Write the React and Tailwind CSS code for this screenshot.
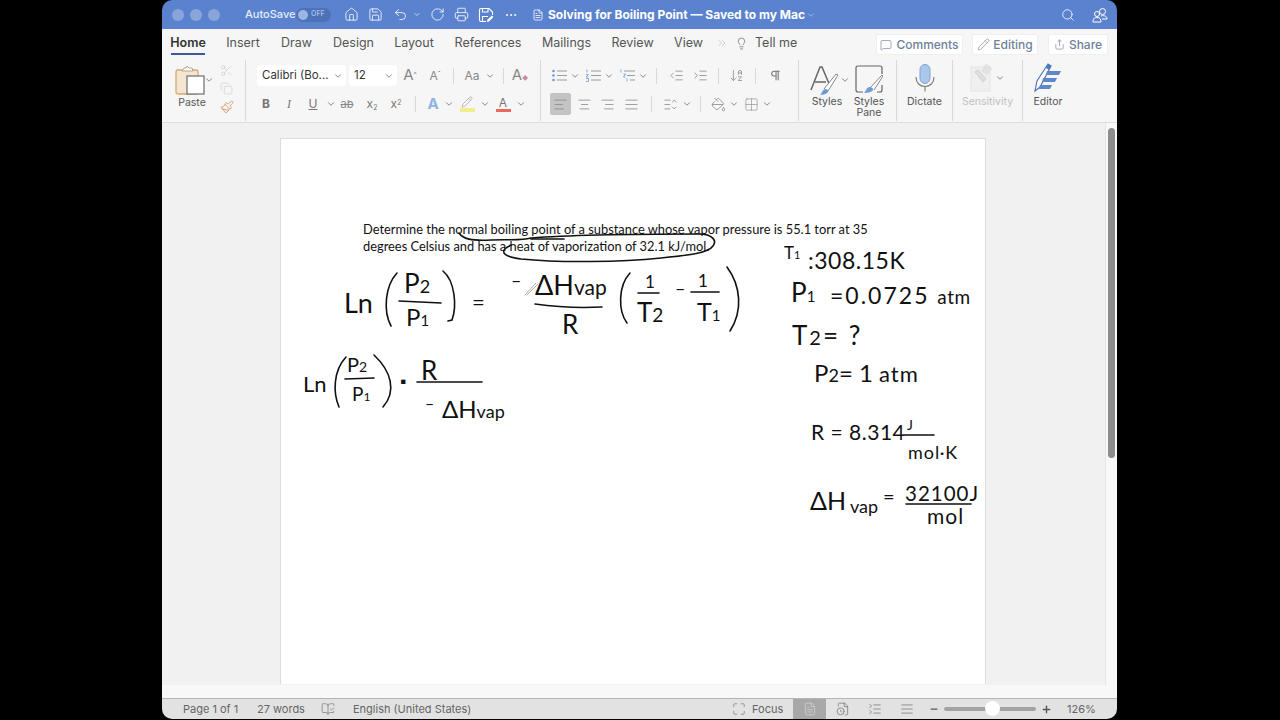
import React from "react";
import {
  House, Save, Undo2, RotateCw, Printer, Ellipsis, Search, Lightbulb, MessageSquare, Pencil, Share,
  ChevronDown, ChevronsRight, Scissors, Copy, Paintbrush, IndentDecrease,
  IndentIncrease, ArrowDownAZ, Pilcrow, AlignLeft, AlignCenter, AlignRight, AlignJustify, ListChevronsUpDown,
  PaintBucket, Grid2x2, BookOpenCheck, Maximize, FileText, Minus, Plus, AlignJustify as Lines, FileClock, ListCollapse,
} from "lucide-react";

const Chev = ({ className = "" }) => <ChevronDown className={`w-[10px] h-[10px] text-gray-500 shrink-0 ${className}`} strokeWidth={2} />;
const Div = ({ className = "" }) => <div className={`w-px bg-[#d9d9d9] shrink-0 ${className}`} />;

function Tab({ children, active, className }) {
  return (
    <div className={`flex flex-col items-center shrink-0 ${className}`}>
      <span className={`text-[12.5px] leading-[16px] ${active ? "font-semibold text-[#333]" : "text-[#555]"}`}>{children}</span>
      {active && <div className="w-[34px] h-[2px] bg-[#3c5a9a] mt-[2px] -mb-[4px]" />}
    </div>
  );
}

function PasteIcon() {
  return (
    <svg width="30" height="30" viewBox="0 0 30 30" fill="none">
      <rect x="1" y="5" width="22" height="24" rx="2" fill="#f4e6d2" stroke="#d9a86c" strokeWidth="1.3" />
      <path d="M7 6 L9 3 H11 L12 1 L14 3 H17 L18 6 Z" fill="#fff" stroke="#b9a58c" />
      <rect x="12" y="11" width="17" height="18" fill="#fff" stroke="#777" strokeWidth="1.3" />
    </svg>
  );
}

function StylesIcon() {
  return (
    <svg width="30" height="30" viewBox="0 0 30 30" fill="none">
      <path d="M2 25 L11 2 H13 L21 21 M6 17 H17" stroke="#666" strokeWidth="1.5" />
      <path d="M15 24 L27 9 L29 10 L19 26" stroke="#888" fill="#fff" />
      <path d="M11 30 C13 29 13 25 16 24 C18 24 20 25 19 27 C18 29 14 30 11 30 Z" fill="#6d9bd8" />
    </svg>
  );
}

function PaneIcon() {
  return (
    <svg width="28" height="28" viewBox="0 0 28 28" fill="none">
      <path d="M8 27 H3 Q1 27 1 25 V3 Q1 1 3 1 H25 Q27 1 27 3 V9 M27 20 V25 Q27 27 25 27 H22" stroke="#666" strokeWidth="1.2" />
      <path d="M15 23 L27 10 L28 11 L19 25" stroke="#888" fill="#fff" />
      <path d="M9 28 C11 27 11 23 14 22 C17 22 19 24 18 25 C17 27 13 28 9 28 Z" fill="#6d9bd8" />
    </svg>
  );
}

function MicIcon() {
  return (
    <svg width="20" height="28" viewBox="0 0 20 28" fill="none">
      <rect x="5" y="0.5" width="10" height="19" rx="5" fill="#a9c8ec" stroke="#7ea4d6" />
      <path d="M1 13 C1 19 5 22.5 10 22.5 C15 22.5 19 19 19 13 M10 22.5 V27.5" stroke="#777" strokeWidth="1.1" />
    </svg>
  );
}

function SensitivityIcon() {
  return (
    <svg width="24" height="28" viewBox="0 0 24 28" fill="none">
      <rect x="1" y="3" width="19" height="24" fill="#efefef" stroke="#e4e4e4" />
      <path d="M5 8 L13 18 L16 15 L8 6 Z" fill="#dedede" stroke="#d2d2d2" />
      <rect x="13" y="1" width="8" height="9" rx="2" fill="#e2e2e2" transform="rotate(35 17 5)" />
    </svg>
  );
}

function EditorIcon() {
  return (
    <svg width="30" height="30" viewBox="0 0 30 30" fill="none">
      <path d="M2 28 L4 18 L15 1 L18 3 L7 24 Z" stroke="#4f77bd" strokeWidth="1.2" fill="#fff" />
      <path d="M15 1 L18 3 L16 7 L13 5 Z" fill="#4f77bd" />
      <path d="M14 8 H28 L26 12 H13 Z M10 15 H24 L22 19 H9 Z M7 22 H19 L17 26 H6 Z" fill="#5f86c9" />
    </svg>
  );
}

function SaveEditIcon() {
  return (
    <svg width="16" height="16" viewBox="0 0 16 16" fill="none" stroke="white" strokeWidth="1.1">
      <path d="M8 14.5 H3 Q1.5 14.5 1.5 13 V3 Q1.5 1.5 3 1.5 H11 L14.5 5 V8" />
      <path d="M4.5 1.5 V5 H10 V1.5 M4.5 14 V9.5 H10" />
      <path d="M9 15 L9.5 12.5 L14 8.5 L15.5 10 L11 14.5 Z" fill="white" stroke="none" />
    </svg>
  );
}

function BulletIcon() {
  return (
    <svg width="15" height="13" viewBox="0 0 15 13" className="shrink-0" stroke="#9a9a9a" strokeWidth="1">
      <path d="M5 2 H15 M5 6.5 H15 M5 11 H15" />
      <circle cx="1.5" cy="2" r="1.3" fill="#6f9bd4" stroke="none" />
      <circle cx="1.5" cy="6.5" r="1.3" fill="#6f9bd4" stroke="none" />
      <circle cx="1.5" cy="11" r="1.3" fill="#6f9bd4" stroke="none" />
    </svg>
  );
}

function NumberIcon() {
  return (
    <svg width="15" height="13" viewBox="0 0 15 13" className="shrink-0" stroke="#9a9a9a" strokeWidth="1">
      <path d="M5 2 H15 M5 6.5 H15 M5 11 H15" />
      <path d="M1 0.5 V3.5 M0 5.5 H2.5 L0 8 H2.5 M0 9.5 H2.5 V12.5 H0" stroke="#6f9bd4" strokeWidth="0.8" fill="none" />
    </svg>
  );
}

function MultiIcon() {
  return (
    <svg width="15" height="13" viewBox="0 0 15 13" className="shrink-0" stroke="#9a9a9a" strokeWidth="1">
      <path d="M4 2 H15 M7 6.5 H15 M10 11 H15" />
      <path d="M1 0.5 V3.5 M3.5 5 H5.5 L3.5 8 H5.5 M7 9.5 V12.5" stroke="#6f9bd4" strokeWidth="0.8" fill="none" />
    </svg>
  );
}

function TitleBar() {
  return (
    <div className="h-[29px] shrink-0 bg-[#5a82ce] rounded-t-[10px] flex items-center text-white">
      <div className="w-[10px] shrink-0" />
      <div className="flex gap-[6px] w-[73px] shrink-0">
        <span className="w-[12px] h-[12px] rounded-full bg-[#8aa5da]" />
        <span className="w-[12px] h-[12px] rounded-full bg-[#8aa5da]" />
        <span className="w-[12px] h-[12px] rounded-full bg-[#8aa5da]" />
      </div>
      <span className="text-[11px] font-medium w-[51px] shrink-0 text-[#e6edf9]">AutoSave</span>
      <div className="w-[35px] h-[14px] rounded-full bg-[#4d72b8] flex items-center shrink-0 pl-[2px] gap-[3px]">
        <span className="w-[10px] h-[10px] rounded-full bg-[#9db5e3]" />
        <span className="text-[7px] font-semibold text-[#a7bde6]">OFF</span>
      </div>
      <div className="w-[8px] shrink-0" />
      <div className="w-[24px] flex justify-center shrink-0"><House className="w-[15px] h-[15px]" strokeWidth={1.3} /></div>
      <div className="w-[24px] flex justify-center shrink-0"><Save className="w-[15px] h-[15px]" strokeWidth={1.3} /></div>
      <div className="w-[26px] flex justify-center shrink-0"><Undo2 className="w-[15px] h-[15px]" strokeWidth={1.3} /></div>
      <div className="w-[8px] flex justify-center shrink-0"><ChevronDown className="w-[9px] h-[9px]" /></div>
      <div className="w-[32px] flex justify-center shrink-0"><RotateCw className="w-[15px] h-[15px]" strokeWidth={1.3} /></div>
      <div className="w-[16px] flex justify-center shrink-0"><Printer className="w-[15px] h-[15px]" strokeWidth={1.3} /></div>
      <div className="w-[34px] flex justify-center shrink-0"><SaveEditIcon /></div>
      <div className="w-[16px] flex justify-center shrink-0"><Ellipsis className="w-[14px] h-[14px]" strokeWidth={1.6} /></div>
      <div className="w-[26px] flex justify-end shrink-0 pr-[1px]"><FileText className="w-[12px] h-[12px]" strokeWidth={1.6} /></div>
      <span className="ml-[3px] text-[12px] font-bold whitespace-nowrap w-[258px] shrink-0">Solving for Boiling Point — Saved to my Mac</span>
      <ChevronDown className="w-[10px] h-[10px] text-[#a9c0ea] shrink-0" />
      <div className="flex-1" />
      <Search className="w-[14px] h-[14px] shrink-0 mr-[17px]" strokeWidth={1.4} />
      <svg width="16" height="16" viewBox="0 0 16 16" fill="none" stroke="white" strokeWidth="1" className="shrink-0 mr-[9px]">
        <circle cx="10.5" cy="4.5" r="3" />
        <circle cx="5" cy="7" r="2.5" />
        <path d="M1 15 C1 11 3 10.5 5 10.5 C8 10.5 9 12 9 15 Z M9 9 C12 8 15 9 15 12 H10" />
      </svg>
    </div>
  );
}

function TabRow() {
  return (
    <div className="h-[30px] shrink-0 bg-[#f6f6f6] flex items-center pl-[9px] pb-[2px]">
      <Tab active className="w-[34px]">Home</Tab>
      <Tab className="w-[32px] ml-[22px]">Insert</Tab>
      <Tab className="w-[29px] ml-[23px]">Draw</Tab>
      <Tab className="w-[39px] ml-[23px]">Design</Tab>
      <Tab className="w-[38px] ml-[22px]">Layout</Tab>
      <Tab className="w-[64px] ml-[23px]">References</Tab>
      <Tab className="w-[47px] ml-[23px]">Mailings</Tab>
      <Tab className="w-[39px] ml-[23px]">Review</Tab>
      <Tab className="w-[27px] ml-[23px]">View</Tab>
      <ChevronsRight className="w-[12px] h-[12px] text-[#cfcfcf] ml-[14px] shrink-0" />
      <Lightbulb className="w-[13px] h-[13px] text-[#666] ml-[7px] shrink-0" strokeWidth={1.3} />
      <span className="text-[12.5px] text-[#555] ml-[7px] w-[40px] whitespace-nowrap shrink-0">Tell me</span>
      <div className="w-[81px] shrink-0" />
      <div className="w-[87px] h-[21px] bg-white border border-[#efefef] rounded-[2px] flex items-center justify-center gap-[4px] text-[12px] font-medium text-[#6f7f9c] shrink-0 mt-[3px]">
        <MessageSquare className="w-[12px] h-[12px]" strokeWidth={1.3} />Comments
      </div>
      <div className="w-[66px] h-[21px] ml-[9px] bg-white border border-[#efefef] rounded-[2px] flex items-center justify-center gap-[3px] text-[12px] font-medium text-[#6f7f9c] shrink-0 mt-[3px]">
        <Pencil className="w-[13px] h-[13px]" strokeWidth={1.1} />Editing
      </div>
      <div className="w-[60px] h-[21px] ml-[10px] bg-white border border-[#efefef] rounded-[2px] flex items-center justify-center gap-[4px] text-[12px] font-medium text-[#6f7f9c] shrink-0 mt-[3px]">
        <Share className="w-[11px] h-[11px]" strokeWidth={1.4} />Share
      </div>
    </div>
  );
}

function FontRows() {
  return (
    <div className="w-[294px] shrink-0 flex flex-col">
      <div className="h-[21px] flex items-center mt-[6px] pl-[11px]">
        <div className="w-[89px] h-[21px] bg-white rounded-[3px] flex items-center pl-[5px] pr-[3px] justify-between shrink-0">
          <span className="text-[11.5px] text-[#333] whitespace-nowrap">Calibri (Bo...</span><Chev />
        </div>
        <div className="w-[48px] h-[21px] ml-[3px] bg-white rounded-[3px] flex items-center pl-[5px] pr-[3px] justify-between shrink-0">
          <span className="text-[11.5px] text-[#333]">12</span><Chev />
        </div>
        <div className="w-[26px] text-center text-[15px] text-[#888] shrink-0">A<sup className="text-[7px]">^</sup></div>
        <div className="w-[24px] text-center text-[12px] text-[#888] shrink-0">A<sup className="text-[7px]">ˇ</sup></div>
        <div className="w-[12px] flex justify-center shrink-0"><Div className="h-[16px]" /></div>
        <div className="w-[26px] text-center text-[12px] text-[#888] shrink-0">Aa</div>
        <Chev />
        <div className="w-[16px] flex justify-center shrink-0"><Div className="h-[16px]" /></div>
        <div className="w-[18px] text-center text-[15px] text-[#888] shrink-0 whitespace-nowrap">A<span className="text-[6px] text-[#c98aa0]">◆</span></div>
      </div>
      <div className="h-[22px] flex items-center mt-[7px] pl-[8px]">
        <div className="w-[24px] text-center text-[12px] font-bold text-[#777] shrink-0">B</div>
        <div className="w-[22px] text-center text-[12px] italic text-[#777] font-['Liberation_Serif',serif] shrink-0">I</div>
        <div className="w-[26px] text-center text-[12px] underline text-[#777] shrink-0">U</div>
        <Chev />
        <div className="w-[26px] text-center text-[11px] line-through text-[#888] shrink-0 ml-[-2px]">ab</div>
        <div className="w-[24px] text-center text-[12px] text-[#777] shrink-0">x<sub className="text-[7px]">2</sub></div>
        <div className="w-[24px] text-center text-[12px] text-[#777] shrink-0">x<sup className="text-[7px]">2</sup></div>
        <div className="w-[14px] flex justify-center shrink-0"><Div className="h-[16px]" /></div>
        <div className="w-[22px] text-center text-[15px] font-bold text-[#8fb4e4] shrink-0">A</div>
        <Chev />
        <div className="w-[26px] flex flex-col items-center shrink-0">
          <Pencil className="w-[12px] h-[12px] text-[#999]" strokeWidth={1.3} />
          <div className="w-[15px] h-[4px] bg-[#f3ee8d]" />
        </div>
        <Chev />
        <div className="w-[26px] flex flex-col items-center shrink-0">
          <span className="text-[12px] leading-[12px] text-[#777]">A</span>
          <div className="w-[15px] h-[3px] bg-[#e8685e]" />
        </div>
        <Chev />
      </div>
    </div>
  );
}

function ParaRows() {
  const ic = "w-[15px] h-[15px] text-[#8a8a8a] shrink-0";
  return (
    <div className="w-[257px] shrink-0 flex flex-col">
      <div className="h-[21px] flex items-center mt-[6px] pl-[11px]">
        <BulletIcon />
        <div className="w-[15px] flex justify-center shrink-0"><Chev /></div>
        <div className="w-[4px] shrink-0" />
        <NumberIcon />
        <div className="w-[15px] flex justify-center shrink-0"><Chev /></div>
        <div className="w-[4px] shrink-0" />
        <MultiIcon />
        <div className="w-[15px] flex justify-center shrink-0"><Chev /></div>
        <div className="w-[6px] shrink-0" />
        <Div className="h-[16px]" />
        <div className="w-[12px] shrink-0" />
        <IndentDecrease className={ic} strokeWidth={1.3} />
        <div className="w-[9px] shrink-0" />
        <IndentIncrease className={ic} strokeWidth={1.3} />
        <div className="w-[10px] shrink-0" />
        <Div className="h-[16px]" />
        <div className="w-[10px] shrink-0" />
        <ArrowDownAZ className={ic} strokeWidth={1.3} />
        <div className="w-[11px] shrink-0" />
        <Div className="h-[16px]" />
        <div className="w-[13px] shrink-0" />
        <Pilcrow className="w-[13px] h-[13px] text-[#777] shrink-0" strokeWidth={2} />
      </div>
      <div className="h-[22px] flex items-center mt-[7px] pl-[9px]">
        <div className="w-[21px] h-[22px] bg-[#c4c4c4] rounded-[2px] flex items-center justify-center shrink-0">
          <AlignLeft className={ic} strokeWidth={1.3} />
        </div>
        <div className="w-[24px] flex justify-center pl-[3px] shrink-0"><AlignCenter className={ic} strokeWidth={1.3} /></div>
        <div className="w-[24px] flex justify-center shrink-0"><AlignRight className={ic} strokeWidth={1.3} /></div>
        <div className="w-[24px] flex justify-center shrink-0"><AlignJustify className={ic} strokeWidth={1.3} /></div>
        <div className="w-[17px] flex justify-center shrink-0"><Div className="h-[16px]" /></div>
        <ListChevronsUpDown className={`${ic} ml-[3px]`} strokeWidth={1.3} />
        <div className="w-[17px] flex justify-center shrink-0"><Chev /></div>
        <div className="w-[5px] shrink-0" />
        <Div className="h-[16px]" />
        <div className="w-[10px] shrink-0" />
        <PaintBucket className={ic} strokeWidth={1.3} />
        <div className="w-[16px] flex justify-center shrink-0"><Chev /></div>
        <div className="w-[2px] shrink-0" />
        <Grid2x2 className={ic} strokeWidth={1} />
        <div className="w-[16px] flex justify-center shrink-0"><Chev /></div>
      </div>
    </div>
  );
}

function Label({ children, className = "" }) {
  return <span className={`text-[10.5px] leading-[11px] text-center ${className}`}>{children}</span>;
}

function Ribbon() {
  return (
    <div className="h-[64px] shrink-0 bg-[#f6f6f6] border-b border-[#dedede] flex items-stretch text-[#555]">
      <div className="w-[60px] shrink-0 flex flex-col items-center pt-[6px]">
        <div className="flex items-center pl-[5px]"><PasteIcon /><Chev className="-ml-[1px]" /></div>
        <Label className="mt-[2px]">Paste</Label>
      </div>
      <div className="w-[23px] shrink-0 flex flex-col items-center gap-[5px] pt-[5px] -ml-[6px] mr-[6px] pr-[2px]">
        <Scissors className="w-[13px] h-[13px] text-[#ccc]" strokeWidth={1.2} />
        <Copy className="w-[13px] h-[13px] text-[#ccc]" strokeWidth={1.2} />
        <Paintbrush className="w-[14px] h-[14px] text-[#c98f5d]" strokeWidth={1.4} />
      </div>
      <Div className="my-[1px]" />
      <FontRows />
      <Div className="my-[1px]" />
      <ParaRows />
      <Div className="my-[1px]" />
      <div className="w-[97px] shrink-0 flex">
        <div className="w-[51px] shrink-0 flex flex-col items-center pt-[6px] pl-[9px]">
          <div className="flex items-center"><StylesIcon /><Chev className="ml-[1px]" /></div>
          <Label className="mt-[1px] -ml-[4px]">Styles</Label>
        </div>
        <div className="w-[38px] shrink-0 flex flex-col items-center pt-[6px]">
          <PaneIcon />
          <Label className="mt-[3px]">Styles<br />Pane</Label>
        </div>
      </div>
      <Div className="my-[1px]" />
      <div className="w-[55px] shrink-0 flex flex-col items-center pt-[5px]">
        <MicIcon />
        <Label className="mt-[4px]">Dictate</Label>
      </div>
      <Div className="my-[1px]" />
      <div className="w-[69px] shrink-0 flex flex-col items-center pt-[5px] text-[#c0c0c0]">
        <div className="flex items-center"><SensitivityIcon /><Chev className="ml-[1px]" /></div>
        <Label className="mt-[4px]">Sensitivity</Label>
      </div>
      <Div className="my-[1px]" />
      <div className="w-[50px] shrink-0 flex flex-col items-center pt-[4px]">
        <EditorIcon />
        <Label className="mt-[3px]">Editor</Label>
      </div>
    </div>
  );
}

// ink text sits on the page like pen marks, so it is placed by coordinate
function Ink({ className, children }) {
  return <span className={`absolute whitespace-nowrap font-['Lato',sans-serif] font-normal leading-none text-[#111] ${className}`}>{children}</span>;
}

function InkStrokes() {
  return (
    <svg className="absolute left-0 top-0" width="705" height="546" viewBox="280 138 705 546" fill="none" stroke="#111" strokeWidth="1.6" strokeLinecap="round">
      {/* circled heat of vaporization */}
      <path d="M458 232 C462 238 470 240 490 239 C505 238 520 240 530 237 C580 233 650 233 698 233 C712 233 716 240 712 245 C707 252 690 254 660 257 C620 261 560 262 520 258 C505 256 499 252 505 247 L510 244" />
      <path d="M530 238 L563 238" />
      {/* parens */}
      <path d="M396 272 C384 285 382 310 390 325" />
      <path d="M442 270 C454 280 456 305 451 319 L447 320" />
      <path d="M629 272 C617 285 617 310 626 322" />
      <path d="M726 266 C740 285 742 310 729 330" />
      <path d="M345 356 C332 370 332 392 338 406" />
      <path d="M373 354 C390 370 396 390 382 406" />
      {/* fraction bars */}
      <path d="M398 300 L440 302" />
      <path d="M534 303 C555 306 580 307 601 306" />
      <path d="M637 292 L658 292" />
      <path d="M690 291 L718 291" />
      <path d="M344 378 L373 377" />
      <path d="M416 381 L481 381" />
      <path d="M903 434 L933 434" />
      <path d="M905 503 L970 503" />
      {/* pen cursor */}
      <path d="M524 294 L535 282 M526 294 L537 283" stroke="#999" strokeWidth="0.8" />
    </svg>
  );
}

function Page() {
  return (
    <div className="relative w-[706px] h-[546px] ml-[118px] mt-[15px] bg-white border border-[#dcdcdc] border-b-0 shrink-0">
      <div className="pt-[82px] pl-[82px] font-['Lato',sans-serif] text-[12.85px] leading-[16.5px] text-[#111] whitespace-nowrap">
        <p>Determine the normal boiling point of a substance whose vapor pressure is 55.1 torr at 35</p>
        <p>degrees Celsius and has a heat of vaporization of 32.1 kJ/mol.</p>
      </div>
      <InkStrokes />
      <Ink className="left-[63px] top-[150px] text-[27px]">Ln</Ink>
      <Ink className="left-[123px] top-[131px] text-[26px]">P<span className="text-[18px]">2</span></Ink>
      <Ink className="left-[125px] top-[166px] text-[24px]">P<span className="text-[15px]">1</span></Ink>
      <Ink className="left-[191px] top-[152px] text-[22px]">=</Ink>
      <Ink className="left-[230px] top-[132px] text-[18px]">–</Ink>
      <Ink className="left-[254px] top-[132px] text-[27px]">ΔH<span className="text-[21px]">vap</span></Ink>
      <Ink className="left-[281px] top-[172px] text-[26px]">R</Ink>
      <Ink className="left-[364px] top-[134px] text-[17px]">1</Ink>
      <Ink className="left-[356px] top-[160px] text-[26px]">T<span className="text-[19px]">2</span></Ink>
      <Ink className="left-[394px] top-[140px] text-[18px]">–</Ink>
      <Ink className="left-[417px] top-[133px] text-[17px]">1</Ink>
      <Ink className="left-[416px] top-[160px] text-[25px]">T<span className="text-[15px]">1</span></Ink>

      <Ink className="left-[22px] top-[234px] text-[22px]">Ln</Ink>
      <Ink className="left-[66px] top-[215px] text-[20px]">P<span className="text-[14px]">2</span></Ink>
      <Ink className="left-[71px] top-[245px] text-[19px]">P<span className="text-[12px]">1</span></Ink>
      <Ink className="left-[119px] top-[234px] text-[16px] font-bold">▪</Ink>
      <Ink className="left-[140px] top-[218px] text-[26px]">R</Ink>
      <Ink className="left-[144px] top-[256px] text-[16px]">–</Ink>
      <Ink className="left-[161px] top-[258px] text-[24px]">ΔH<span className="text-[18px]">vap</span></Ink>

      <Ink className="left-[503px] top-[105px] text-[17px]">T<span className="text-[11px]">1</span></Ink>
      <Ink className="left-[527px] top-[110px] text-[23px] tracking-[0.5px]">:308.15K</Ink>
      <Ink className="left-[510px] top-[140px] text-[26px]">P<span className="text-[15px]">1</span></Ink>
      <Ink className="left-[549px] top-[145px] text-[23px] tracking-[2px]">=0.0725 <span className="text-[19px] tracking-[0.5px]">atm</span></Ink>
      <Ink className="left-[511px] top-[183px] text-[26px] tracking-[2px]">T<span className="text-[20px]">2</span>= ?</Ink>
      <Ink className="left-[533px] top-[222px] text-[24px]">P<span className="text-[18px]">2</span>= 1 <span className="text-[22px] tracking-[1px]">atm</span></Ink>
      <Ink className="left-[530px] top-[282px] text-[21px] tracking-[0.5px]">R = 8.314</Ink>
      <Ink className="left-[626px] top-[279px] text-[14px]">J</Ink>
      <Ink className="left-[627px] top-[304px] text-[18px] tracking-[1px]">mol·K</Ink>
      <Ink className="left-[529px] top-[349px] text-[25px]">ΔH</Ink>
      <Ink className="left-[569px] top-[358px] text-[18px]">vap</Ink>
      <Ink className="left-[602px] top-[347px] text-[20px]">=</Ink>
      <Ink className="left-[624px] top-[344px] text-[20.5px] tracking-[1px]">32100J</Ink>
      <Ink className="left-[646px] top-[366px] text-[21px] tracking-[1px]">mol</Ink>
    </div>
  );
}

function DocArea() {
  return (
    <div className="h-[562px] shrink-0 flex">
      <div className="w-[943px] shrink-0 bg-[#f1f1f1] overflow-hidden">
        <Page />
      </div>
      <div className="w-[12px] shrink-0 bg-[#f8f8f8] border-l border-[#e6e6e6] pt-[5px] pl-[2px]">
        <div className="w-[7px] h-[330px] bg-[#8c8c8c] rounded-full" />
      </div>
    </div>
  );
}

function StatusBar() {
  const ic = "w-[14px] h-[14px] text-[#777] shrink-0";
  return (
    <div className="h-[21px] shrink-0 bg-[#e2e2e2] border-t border-[#b5b5b5] rounded-b-[10px] flex items-center text-[11px] text-[#666]">
      <span className="w-[55px] ml-[21px] whitespace-nowrap shrink-0">Page 1 of 1</span>
      <span className="w-[47px] ml-[19px] whitespace-nowrap shrink-0">27 words</span>
      <BookOpenCheck className={`${ic} ml-[17px]`} strokeWidth={1.2} />
      <span className="w-[118px] ml-[18px] whitespace-nowrap shrink-0">English (United States)</span>
      <div className="w-[261px] shrink-0" />
      <Maximize className={ic} strokeWidth={1.2} />
      <span className="w-[31px] ml-[6px] text-[#666] shrink-0">Focus</span>
      <div className="w-[33px] h-[20px] ml-[10px] bg-[#a8a8a8] flex items-center justify-center shrink-0">
        <FileText className="w-[14px] h-[14px] text-[#d8d8d8]" strokeWidth={1.2} />
      </div>
      <div className="w-[34px] flex justify-center shrink-0"><FileClock className={ic} strokeWidth={1.3} /></div>
      <div className="w-[30px] flex justify-center shrink-0"><ListCollapse className={ic} strokeWidth={1.3} /></div>
      <div className="w-[34px] flex justify-center shrink-0"><Lines className={ic} strokeWidth={1.3} /></div>
      <Minus className="w-[10px] h-[10px] text-[#555] ml-[5px] shrink-0" strokeWidth={3} />
      <div className="w-[92px] ml-[5px] h-[4px] bg-[#a3a3a3] rounded-full relative shrink-0">
        <span className="absolute left-[41px] top-[-6px] w-[15px] h-[15px] rounded-full bg-white" />
      </div>
      <Plus className="w-[11px] h-[11px] text-[#555] ml-[5px] shrink-0" strokeWidth={3} />
      <span className="ml-[15px] whitespace-nowrap shrink-0">126%</span>
    </div>
  );
}

export default function App() {
  return (
    <div className="w-[1280px] h-[720px] bg-black overflow-hidden pl-[162px] font-['Inter',sans-serif]">
      <div className="w-[955px] h-[719px] flex flex-col overflow-hidden">
        <TitleBar />
        <TabRow />
        <Ribbon />
        <DocArea />
        <div className="h-[13px] shrink-0 bg-[#f8f8f8]" />
        <StatusBar />
      </div>
    </div>
  );
}
